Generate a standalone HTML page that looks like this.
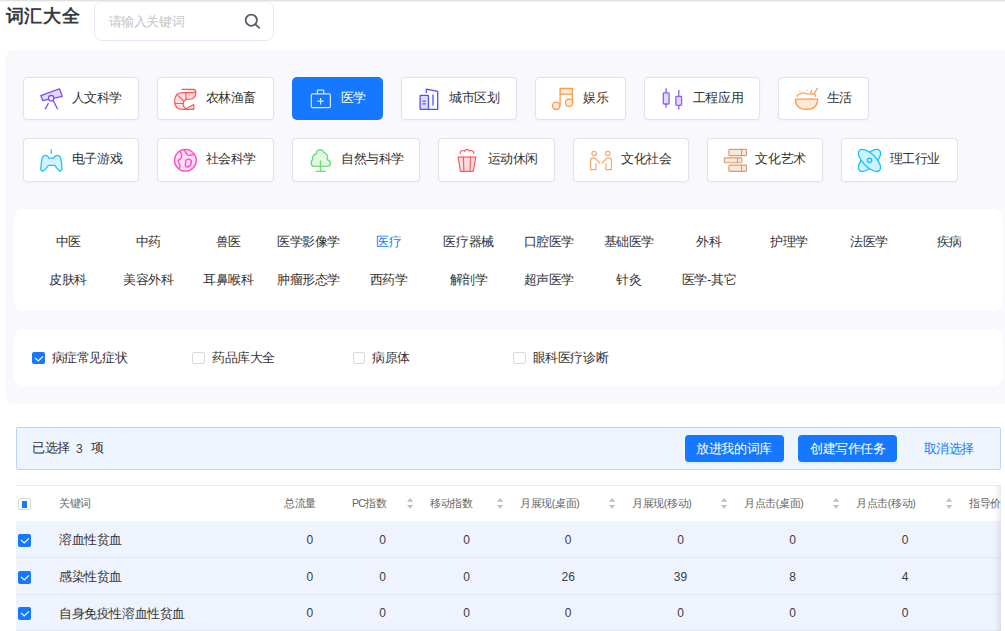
<!DOCTYPE html>
<html><head><meta charset="utf-8"><style>
html,body{margin:0;padding:0;background:#fff;}
body{width:1005px;height:631px;overflow:hidden;position:relative;font-family:"Liberation Sans",sans-serif;color:#333;}
.t{position:absolute;white-space:nowrap;font-size:13px;letter-spacing:-0.4px;line-height:20px;}
.ic{position:absolute;overflow:visible;}
.box{position:absolute;box-sizing:border-box;}
</style></head><body>

<div class="box" style="left:0;top:0;width:1005px;height:2px;background:linear-gradient(#d8d9dc,#e9eaec 45%,#fff)"></div>
<span class="t" style="left:5.6px;top:3px;font-size:18px;letter-spacing:0.9px;line-height:26px;font-weight:bold;color:#363b42">词汇大全</span>
<div class="box" style="left:94px;top:1.3px;width:180px;height:39.7px;border:1px solid #e6e7f6;border-radius:8px;background:#fff"></div>
<span class="t" style="left:108.70px;top:11.80px;color:#c4c4c4">请输入关键词</span>
<svg class="ic" style="left:243.4px;top:11.6px" width="19" height="18" viewBox="0 0 19 18"><g stroke="#56606a" stroke-width="1.8" fill="none" stroke-linecap="round"><circle cx="8.3" cy="8.2" r="5.6"/><path d="M12.4,12.3 L16.2,15.8"/></g></svg>
<div class="box" style="left:5px;top:50px;width:1020px;height:353.8px;background:#f8f8fd;border-radius:10px"></div>
<div class="box" style="left:23px;top:77px;width:116px;height:43px;background:#fff;border:1px solid #e0e3e9;border-radius:4px;box-shadow:0 1px 3px rgba(20,30,60,0.04)"></div>
<svg class="ic" style="left:36px;top:84px" width="32" height="32" viewBox="0 0 32 32"><g stroke="#7c4dff" stroke-width="1.3" fill="#e3dbff" stroke-linejoin="round">
<path d="M4.8,11.6 L23.4,4.8 L26.2,12.3 L6.8,16.6 Z"/>
<circle cx="15.2" cy="14.2" r="2.7" fill="#fff"/>
<path d="M12.5,19.1 L9,25.3 M17.3,16.8 L21.7,25.3" fill="none"/></g></svg>
<span class="t" style="left:71.70px;top:88.10px;color:#333">人文科学</span>
<div class="box" style="left:157px;top:77px;width:117px;height:43px;background:#fff;border:1px solid #e0e3e9;border-radius:4px;box-shadow:0 1px 3px rgba(20,30,60,0.04)"></div>
<svg class="ic" style="left:169px;top:84px" width="32" height="32" viewBox="0 0 32 32"><g stroke="#ff5659" stroke-width="1.15" fill="#ffdede" stroke-linejoin="round" stroke-linecap="round">
<path d="M12.9,5.3 H24.3 Q26.9,5.3 26.9,8.6 Q26.9,15.2 20.5,15.2 H18.2 Q14.2,16 14.2,20.3 Q14.6,24.2 17.2,24.4 L24.8,20.4 V25.4 H12.9 Q5.6,25 5.6,17 Q5.8,8.8 13.2,8.6 H26.8" />
<path d="M8.9,11.4 L14.5,16.6 M6,19.5 H14.1 M17,8.8 V15.4" fill="none"/>
<circle cx="20.3" cy="11.4" r="0.5" fill="#ff4d4f" stroke="none"/></g></svg>
<span class="t" style="left:205.70px;top:88.10px;color:#333">农林渔畜</span>
<div class="box" style="left:292px;top:77px;width:91px;height:43px;background:#1677ff;border-radius:5px"></div>
<svg class="ic" style="left:305px;top:84px" width="32" height="32" viewBox="0 0 32 32"><g stroke="#d9e7ff" stroke-width="1.2" fill="none" stroke-linejoin="round">
<rect x="6.3" y="9.9" width="19.1" height="13.7" rx="1.3"/>
<path d="M12.4,9.9 V6.6 Q12.4,6.1 12.9,6.1 H18.3 Q18.8,6.1 18.8,6.6 V9.9"/>
<path d="M15.6,14 V20.4 M12.4,17.2 H18.8"/></g></svg>
<span class="t" style="left:340.70px;top:88.10px;color:#fff">医学</span>
<div class="box" style="left:401px;top:77px;width:116px;height:43px;background:#fff;border:1px solid #e0e3e9;border-radius:4px;box-shadow:0 1px 3px rgba(20,30,60,0.04)"></div>
<svg class="ic" style="left:413px;top:84px" width="32" height="32" viewBox="0 0 32 32"><g stroke="#4f50ff" stroke-width="1.3" fill="none" stroke-linejoin="round">
<rect x="7.1" y="11.4" width="8.4" height="14" rx="0.6" fill="#dcdcff"/>
<path d="M13.4,9.1 V5.2 L24.7,7.4 V25.4 H15.5"/>
<path d="M9.6,17.2 H12.7 M9.6,19.8 H12.7 M20,10.6 V21.6"/></g></svg>
<span class="t" style="left:449.20px;top:88.10px;color:#333">城市区划</span>
<div class="box" style="left:535px;top:77px;width:91px;height:43px;background:#fff;border:1px solid #e0e3e9;border-radius:4px;box-shadow:0 1px 3px rgba(20,30,60,0.04)"></div>
<svg class="ic" style="left:547px;top:84px" width="32" height="32" viewBox="0 0 32 32"><g stroke="#ff9a4d" stroke-width="1.3" fill="#ffe8d6" stroke-linejoin="round">
<rect x="13.1" y="4.4" width="12.3" height="5.7"/>
<path d="M13.1,10 V21.6 M25.4,10 V18.6" fill="none"/>
<circle cx="9.2" cy="21.8" r="3.7"/><circle cx="22.1" cy="18.7" r="3.7"/></g></svg>
<span class="t" style="left:583.20px;top:88.10px;color:#333">娱乐</span>
<div class="box" style="left:644px;top:77px;width:116px;height:43px;background:#fff;border:1px solid #e0e3e9;border-radius:4px;box-shadow:0 1px 3px rgba(20,30,60,0.04)"></div>
<svg class="ic" style="left:657px;top:84px" width="32" height="32" viewBox="0 0 32 32"><g stroke="#8c5cff" stroke-width="1.3" fill="#e4d9ff" stroke-linejoin="round">
<path d="M9.1,4.3 V8.9 M9.1,20 V23.8 M21.8,6.1 V12.4 M21.8,21.3 V25.4" fill="none"/>
<rect x="6.3" y="8.9" width="5.8" height="11.1" rx="0.8"/>
<rect x="18.9" y="12.4" width="5.7" height="8.9" rx="0.8"/></g></svg>
<span class="t" style="left:692.90px;top:88.10px;color:#333">工程应用</span>
<div class="box" style="left:778px;top:77px;width:91px;height:43px;background:#fff;border:1px solid #e0e3e9;border-radius:4px;box-shadow:0 1px 3px rgba(20,30,60,0.04)"></div>
<svg class="ic" style="left:790px;top:84px" width="32" height="32" viewBox="0 0 32 32"><g stroke="#ff9a4d" stroke-width="1.2" fill="none" stroke-linejoin="round" stroke-linecap="round">
<path d="M5.4,15.2 H27.6 Q27.6,25.4 16.5,25.4 Q5.4,25.4 5.4,15.2 Z" fill="#ffe8d6"/>
<path d="M7.1,12.4 Q7.6,9.8 10.2,10 Q12.3,8.2 14.6,9.2 Q16.8,10 19.2,10 Q21.5,9.9 24.3,9.9 Q25.6,10.6 25.6,12.4"/>
<path d="M21.6,6.3 L20.6,10 M27.4,4.3 L24,9.9"/>
<circle cx="9.9" cy="7.1" r="0.6" fill="#ff9a4d" stroke="none"/><circle cx="17" cy="6.1" r="0.6" fill="#ff9a4d" stroke="none"/></g></svg>
<span class="t" style="left:826.90px;top:88.10px;color:#333">生活</span>
<div class="box" style="left:23px;top:138px;width:116px;height:44px;background:#fff;border:1px solid #e0e3e9;border-radius:4px;box-shadow:0 1px 3px rgba(20,30,60,0.04)"></div>
<svg class="ic" style="left:36px;top:145px" width="32" height="32" viewBox="0 0 32 32"><g stroke="#19c6f7" stroke-width="1.3" fill="#d3f4fe" stroke-linejoin="round">
<path d="M15.2,4.6 V9" fill="none"/>
<path d="M6.2,13.4 Q7,10.2 9.6,10.3 Q11.6,10.4 13.1,13.1 H17.5 Q19,10.4 21.1,10.3 Q23.9,10.2 24.7,13.4 Q25.9,19 25.9,24 Q25.6,26.2 23.6,26 Q22.8,25.8 18.8,20.3 H12.4 Q8.2,25.9 7,26 Q4.8,26 4.8,24 Q5,19 6.2,13.4 Z"/></g></svg>
<span class="t" style="left:71.90px;top:149.40px;color:#333">电子游戏</span>
<div class="box" style="left:157px;top:138px;width:117px;height:44px;background:#fff;border:1px solid #e0e3e9;border-radius:4px;box-shadow:0 1px 3px rgba(20,30,60,0.04)"></div>
<svg class="ic" style="left:169px;top:145px" width="32" height="32" viewBox="0 0 32 32"><g stroke="#ff4dc1" stroke-width="1.3" fill="none" stroke-linejoin="round">
<circle cx="16.4" cy="15.3" r="10.9" fill="#ffdcf3"/>
<path d="M10.9,6.4 Q13.5,9.5 12.2,12.8 Q10.8,14.2 9.2,15.6 Q9.8,18 11,19.8 Q11.2,21.8 10.2,23.3"/>
<path d="M15.4,4.7 Q16.5,8.2 18.8,10.1 Q21.5,10.8 24.8,9.1"/>
<path d="M17.2,15.2 Q18.4,13.8 20.6,14.4 Q23,15.5 22.3,18 Q21.5,21.5 18.5,22 Q16.3,22.3 16.4,19.5 Q16.4,17 17.2,15.2 Z"/></g></svg>
<span class="t" style="left:205.70px;top:149.40px;color:#333">社会科学</span>
<div class="box" style="left:292px;top:138px;width:128px;height:44px;background:#fff;border:1px solid #e0e3e9;border-radius:4px;box-shadow:0 1px 3px rgba(20,30,60,0.04)"></div>
<svg class="ic" style="left:305px;top:145px" width="32" height="32" viewBox="0 0 32 32"><g stroke="#6cd977" stroke-width="1.3" fill="#e1f7e3" stroke-linejoin="round" stroke-linecap="round">
<path d="M8.6,21.3 Q6,20.8 6.1,18 Q6.2,15.6 7.6,14.6 Q7,11.8 8.9,10 Q9.8,9.2 11.1,9 Q11.4,5 15,4.6 Q17.8,4.5 18.6,7.4 Q21.4,8 22.4,10.8 Q22.8,12.6 22.3,14.6 Q25.6,16 25.6,18.2 Q25.4,21.2 22.4,21.3 Z"/>
<path d="M15.5,15.8 V26.4 M11.2,26.4 H20.3" fill="none"/></g></svg>
<span class="t" style="left:341.10px;top:149.40px;color:#333">自然与科学</span>
<div class="box" style="left:438px;top:138px;width:117px;height:44px;background:#fff;border:1px solid #e0e3e9;border-radius:4px;box-shadow:0 1px 3px rgba(20,30,60,0.04)"></div>
<svg class="ic" style="left:451px;top:145px" width="32" height="32" viewBox="0 0 32 32"><g stroke="#ff5a60" stroke-width="1.2" fill="none" stroke-linejoin="round" stroke-linecap="round">
<path d="M7.1,12.2 H24.8 L22.2,26.4 H9.5 Z" fill="#ffdcdd"/>
<path d="M12.4,12.2 L12.9,26.4 M19.5,12.2 L19,26.4"/>
<path d="M9.1,8.4 Q9.2,5.4 11.6,5.5 Q12.8,5.6 13.4,6.4 Q14.3,4.3 15.8,4.3 Q17.5,4.3 18.1,6 Q19,5.3 20.5,5.5 Q22.9,5.9 22.8,8.4"/></g></svg>
<span class="t" style="left:487.50px;top:149.40px;color:#333">运动休闲</span>
<div class="box" style="left:573px;top:138px;width:116px;height:44px;background:#fff;border:1px solid #e0e3e9;border-radius:4px;box-shadow:0 1px 3px rgba(20,30,60,0.04)"></div>
<svg class="ic" style="left:585px;top:145px" width="32" height="32" viewBox="0 0 32 32"><g stroke="#ffa264" stroke-width="1.15" fill="none" stroke-linejoin="round" stroke-linecap="round">
<circle cx="9.1" cy="8.4" r="2.2"/><circle cx="22.8" cy="8.4" r="2.2"/>
<path d="M10.9,18.6 V24.6 H5.6 V15.2 Q5.6,12.9 8.4,12.9 Q9.8,12.9 10.8,13.8 L14.7,18"/>
<path d="M17.2,18 L21.1,13.8 Q22.1,12.9 23.6,12.9 Q26.4,12.9 26.4,15.2 V24.6 H20.9 V18.6"/></g></svg>
<span class="t" style="left:621.30px;top:149.40px;color:#333">文化社会</span>
<div class="box" style="left:707px;top:138px;width:116px;height:44px;background:#fff;border:1px solid #e0e3e9;border-radius:4px;box-shadow:0 1px 3px rgba(20,30,60,0.04)"></div>
<svg class="ic" style="left:720px;top:145px" width="32" height="32" viewBox="0 0 32 32"><g stroke="#db9b70" stroke-width="1.15" fill="#f7e8de" stroke-linejoin="round">
<rect x="8.9" y="4.4" width="17.5" height="6.2" rx="0.8"/><rect x="4.3" y="12.9" width="17.5" height="4.8" rx="0.8"/><rect x="8.9" y="20.1" width="17.5" height="6.2" rx="0.8"/>
<path d="M21.6,4.4 V10.6 M17.5,12.9 V17.7 M21.6,20.1 V26.3" fill="none"/></g></svg>
<span class="t" style="left:755.40px;top:149.40px;color:#333">文化艺术</span>
<div class="box" style="left:841px;top:138px;width:117px;height:44px;background:#fff;border:1px solid #e0e3e9;border-radius:4px;box-shadow:0 1px 3px rgba(20,30,60,0.04)"></div>
<svg class="ic" style="left:854px;top:145px" width="32" height="32" viewBox="0 0 32 32"><g stroke="#16c4f6" stroke-width="1.3" fill="#cff2fd" stroke-linejoin="round">
<ellipse cx="15.5" cy="15.4" rx="14.2" ry="6.5" transform="rotate(-45 15.5 15.4)"/>
<ellipse cx="15.5" cy="15.4" rx="14.2" ry="6.5" transform="rotate(45 15.5 15.4)"/>
<path d="M5.5,5.4 Q15,8 25.5,25.4 M5.5,5.4" fill="none" stroke="none"/>
<circle cx="15.5" cy="15.3" r="2.2" fill="none"/></g></svg>
<span class="t" style="left:889.70px;top:149.40px;color:#333">理工行业</span>
<div class="box" style="left:14px;top:208.5px;width:989px;height:102px;background:#fff;border-radius:10px"></div>
<span class="t" style="left:8.20px;width:120px;text-align:center;top:231.80px;color:#333">中医</span>
<span class="t" style="left:88.30px;width:120px;text-align:center;top:231.80px;color:#333">中药</span>
<span class="t" style="left:168.40px;width:120px;text-align:center;top:231.80px;color:#333">兽医</span>
<span class="t" style="left:248.50px;width:120px;text-align:center;top:231.80px;color:#333">医学影像学</span>
<span class="t" style="left:328.60px;width:120px;text-align:center;top:231.80px;color:#1677ff">医疗</span>
<span class="t" style="left:408.70px;width:120px;text-align:center;top:231.80px;color:#333">医疗器械</span>
<span class="t" style="left:488.80px;width:120px;text-align:center;top:231.80px;color:#333">口腔医学</span>
<span class="t" style="left:568.90px;width:120px;text-align:center;top:231.80px;color:#333">基础医学</span>
<span class="t" style="left:649.00px;width:120px;text-align:center;top:231.80px;color:#333">外科</span>
<span class="t" style="left:729.10px;width:120px;text-align:center;top:231.80px;color:#333">护理学</span>
<span class="t" style="left:809.20px;width:120px;text-align:center;top:231.80px;color:#333">法医学</span>
<span class="t" style="left:889.30px;width:120px;text-align:center;top:231.80px;color:#333">疾病</span>
<span class="t" style="left:8.20px;width:120px;text-align:center;top:269.60px;color:#333">皮肤科</span>
<span class="t" style="left:88.30px;width:120px;text-align:center;top:269.60px;color:#333">美容外科</span>
<span class="t" style="left:168.40px;width:120px;text-align:center;top:269.60px;color:#333">耳鼻喉科</span>
<span class="t" style="left:248.50px;width:120px;text-align:center;top:269.60px;color:#333">肿瘤形态学</span>
<span class="t" style="left:328.60px;width:120px;text-align:center;top:269.60px;color:#333">西药学</span>
<span class="t" style="left:408.70px;width:120px;text-align:center;top:269.60px;color:#333">解剖学</span>
<span class="t" style="left:488.80px;width:120px;text-align:center;top:269.60px;color:#333">超声医学</span>
<span class="t" style="left:568.90px;width:120px;text-align:center;top:269.60px;color:#333">针灸</span>
<span class="t" style="left:649.00px;width:120px;text-align:center;top:269.60px;color:#333">医学-其它</span>
<div class="box" style="left:14px;top:329px;width:989px;height:56.8px;background:#fff;border-radius:10px"></div>
<div class="box" style="left:32.00px;top:351.9px;width:13px;height:12.5px;background:#1677ff;border-radius:2px"></div>
<svg class="ic" style="left:32.00px;top:351.9px" width="13" height="13" viewBox="0 0 13 13"><path d="M3,5.9 L6.2,9 L11,4.3" stroke="#fff" stroke-width="1.15" fill="none"/></svg>
<span class="t" style="left:51.70px;top:347.50px;">病症常见症状</span>
<div class="box" style="left:192.30px;top:351.9px;width:12.8px;height:12.5px;background:#fff;border:1px solid #d9d9d9;border-radius:2px"></div>
<span class="t" style="left:212.00px;top:347.50px;">药品库大全</span>
<div class="box" style="left:352.60px;top:351.9px;width:12.8px;height:12.5px;background:#fff;border:1px solid #d9d9d9;border-radius:2px"></div>
<span class="t" style="left:372.30px;top:347.50px;">病原体</span>
<div class="box" style="left:512.90px;top:351.9px;width:12.8px;height:12.5px;background:#fff;border:1px solid #d9d9d9;border-radius:2px"></div>
<span class="t" style="left:532.60px;top:347.50px;">眼科医疗诊断</span>
<div class="box" style="left:16.4px;top:427.3px;width:984.5px;height:43px;background:#eef5ff;border:1px solid #b8d7ff;border-radius:2px"></div>
<span class="t" style="left:32.00px;top:437.90px;">已选择</span>
<span class="t" style="left:76.00px;top:438.90px;font-size:12px;letter-spacing:0;color:#444">3</span>
<span class="t" style="left:90.80px;top:437.90px;">项</span>
<div class="box" style="left:685.1px;top:435.1px;width:98.8px;height:26.7px;background:#1677ff;border-radius:4px;box-shadow:0 2px 0 rgba(5,145,255,0.08)"></div>
<span class="t" style="left:696.20px;top:438.80px;color:#fff">放进我的词库</span>
<div class="box" style="left:798.1px;top:435.1px;width:98.5px;height:26.7px;background:#1677ff;border-radius:4px;box-shadow:0 2px 0 rgba(5,145,255,0.08)"></div>
<span class="t" style="left:810.00px;top:438.80px;color:#fff">创建写作任务</span>
<span class="t" style="left:923.60px;top:438.80px;color:#1677ff">取消选择</span>
<div class="box" style="left:16.2px;top:484.6px;width:984.8px;height:1px;background:#ebebf8"></div>
<div class="box" style="left:18.2px;top:498.2px;width:12.8px;height:11.5px;background:#fff;border:1px solid #d9d9d9;border-radius:2px"></div>
<div class="box" style="left:22.3px;top:501.1px;width:5.2px;height:6.6px;background:#1677ff"></div>
<span class="t" style="left:59.00px;top:493.6px;font-size:11px;letter-spacing:0;color:#666;transform:scale(0.96);transform-origin:0 0">关键词</span>
<span class="t" style="left:283.50px;top:493.6px;font-size:11px;letter-spacing:0;color:#666;transform:scale(0.96);transform-origin:0 0">总流量</span>
<span class="t" style="left:351.50px;top:493.6px;font-size:11px;letter-spacing:0;color:#666;transform:scale(0.96);transform-origin:0 0"><span style="letter-spacing:-0.9px">PC</span>指数</span>
<span class="t" style="left:429.50px;top:493.6px;font-size:11px;letter-spacing:0;color:#666;transform:scale(0.96);transform-origin:0 0">移动指数</span>
<span class="t" style="left:519.70px;top:493.6px;font-size:11px;letter-spacing:0;color:#666;transform:scale(0.96);transform-origin:0 0">月展现(桌面)</span>
<span class="t" style="left:631.50px;top:493.6px;font-size:11px;letter-spacing:0;color:#666;transform:scale(0.96);transform-origin:0 0">月展现(移动)</span>
<span class="t" style="left:744.00px;top:493.6px;font-size:11px;letter-spacing:0;color:#666;transform:scale(0.96);transform-origin:0 0">月点击(桌面)</span>
<span class="t" style="left:856.00px;top:493.6px;font-size:11px;letter-spacing:0;color:#666;transform:scale(0.96);transform-origin:0 0">月点击(移动)</span>
<span class="t" style="left:969.20px;top:493.6px;font-size:11px;letter-spacing:0;color:#666;transform:scale(0.96);transform-origin:0 0">指导价</span>
<svg class="ic" style="left:406.60px;top:498px" width="8" height="11" viewBox="0 0 8 11"><path d="M3.15,0 L6.3,3.8 H0 Z M0,7 H6.3 L3.15,10.8 Z" fill="#bfbfbf"/></svg>
<svg class="ic" style="left:496.80px;top:498px" width="8" height="11" viewBox="0 0 8 11"><path d="M3.15,0 L6.3,3.8 H0 Z M0,7 H6.3 L3.15,10.8 Z" fill="#bfbfbf"/></svg>
<svg class="ic" style="left:608.80px;top:498px" width="8" height="11" viewBox="0 0 8 11"><path d="M3.15,0 L6.3,3.8 H0 Z M0,7 H6.3 L3.15,10.8 Z" fill="#bfbfbf"/></svg>
<svg class="ic" style="left:721.00px;top:498px" width="8" height="11" viewBox="0 0 8 11"><path d="M3.15,0 L6.3,3.8 H0 Z M0,7 H6.3 L3.15,10.8 Z" fill="#bfbfbf"/></svg>
<svg class="ic" style="left:833.30px;top:498px" width="8" height="11" viewBox="0 0 8 11"><path d="M3.15,0 L6.3,3.8 H0 Z M0,7 H6.3 L3.15,10.8 Z" fill="#bfbfbf"/></svg>
<svg class="ic" style="left:945.80px;top:498px" width="8" height="11" viewBox="0 0 8 11"><path d="M3.15,0 L6.3,3.8 H0 Z M0,7 H6.3 L3.15,10.8 Z" fill="#bfbfbf"/></svg>
<div class="box" style="left:16.2px;top:520.7px;width:984.8px;height:111px;background:#eff3fe"></div>
<div class="box" style="left:16.2px;top:557px;width:984.8px;height:1px;background:#e4e8f4"></div>
<div class="box" style="left:16.2px;top:594px;width:984.8px;height:1px;background:#e4e8f4"></div>
<div class="box" style="left:16.2px;top:630px;width:984.8px;height:1px;background:#e4e8f4"></div>
<div class="box" style="left:18.2px;top:533.90px;width:12.8px;height:13px;background:#1677ff;border-radius:2px"></div>
<svg class="ic" style="left:18.2px;top:533.90px" width="13" height="13" viewBox="0 0 13 13"><path d="M3,5.9 L6.2,9 L11,4.3" stroke="#fff" stroke-width="1.15" fill="none"/></svg>
<span class="t" style="left:59.00px;top:530.40px;">溶血性贫血</span>
<span class="t" style="left:279.80px;width:60px;text-align:center;top:530.00px;letter-spacing:0;font-size:12px;color:#3c3c3c">0</span>
<span class="t" style="left:352.50px;width:60px;text-align:center;top:530.00px;letter-spacing:0;font-size:12px;color:#3c3c3c">0</span>
<span class="t" style="left:436.70px;width:60px;text-align:center;top:530.00px;letter-spacing:0;font-size:12px;color:#3c3c3c">0</span>
<span class="t" style="left:538.20px;width:60px;text-align:center;top:530.00px;letter-spacing:0;font-size:12px;color:#3c3c3c">0</span>
<span class="t" style="left:650.50px;width:60px;text-align:center;top:530.00px;letter-spacing:0;font-size:12px;color:#3c3c3c">0</span>
<span class="t" style="left:762.60px;width:60px;text-align:center;top:530.00px;letter-spacing:0;font-size:12px;color:#3c3c3c">0</span>
<span class="t" style="left:875.20px;width:60px;text-align:center;top:530.00px;letter-spacing:0;font-size:12px;color:#3c3c3c">0</span>
<div class="box" style="left:18.2px;top:570.60px;width:12.8px;height:13px;background:#1677ff;border-radius:2px"></div>
<svg class="ic" style="left:18.2px;top:570.60px" width="13" height="13" viewBox="0 0 13 13"><path d="M3,5.9 L6.2,9 L11,4.3" stroke="#fff" stroke-width="1.15" fill="none"/></svg>
<span class="t" style="left:59.00px;top:567.30px;">感染性贫血</span>
<span class="t" style="left:279.80px;width:60px;text-align:center;top:566.90px;letter-spacing:0;font-size:12px;color:#3c3c3c">0</span>
<span class="t" style="left:352.50px;width:60px;text-align:center;top:566.90px;letter-spacing:0;font-size:12px;color:#3c3c3c">0</span>
<span class="t" style="left:436.70px;width:60px;text-align:center;top:566.90px;letter-spacing:0;font-size:12px;color:#3c3c3c">0</span>
<span class="t" style="left:538.20px;width:60px;text-align:center;top:566.90px;letter-spacing:0;font-size:12px;color:#3c3c3c">26</span>
<span class="t" style="left:650.50px;width:60px;text-align:center;top:566.90px;letter-spacing:0;font-size:12px;color:#3c3c3c">39</span>
<span class="t" style="left:762.60px;width:60px;text-align:center;top:566.90px;letter-spacing:0;font-size:12px;color:#3c3c3c">8</span>
<span class="t" style="left:875.20px;width:60px;text-align:center;top:566.90px;letter-spacing:0;font-size:12px;color:#3c3c3c">4</span>
<div class="box" style="left:18.2px;top:607.00px;width:12.8px;height:13px;background:#1677ff;border-radius:2px"></div>
<svg class="ic" style="left:18.2px;top:607.00px" width="13" height="13" viewBox="0 0 13 13"><path d="M3,5.9 L6.2,9 L11,4.3" stroke="#fff" stroke-width="1.15" fill="none"/></svg>
<span class="t" style="left:59.00px;top:603.70px;">自身免疫性溶血性贫血</span>
<span class="t" style="left:279.80px;width:60px;text-align:center;top:603.30px;letter-spacing:0;font-size:12px;color:#3c3c3c">0</span>
<span class="t" style="left:352.50px;width:60px;text-align:center;top:603.30px;letter-spacing:0;font-size:12px;color:#3c3c3c">0</span>
<span class="t" style="left:436.70px;width:60px;text-align:center;top:603.30px;letter-spacing:0;font-size:12px;color:#3c3c3c">0</span>
<span class="t" style="left:538.20px;width:60px;text-align:center;top:603.30px;letter-spacing:0;font-size:12px;color:#3c3c3c">0</span>
<span class="t" style="left:650.50px;width:60px;text-align:center;top:603.30px;letter-spacing:0;font-size:12px;color:#3c3c3c">0</span>
<span class="t" style="left:762.60px;width:60px;text-align:center;top:603.30px;letter-spacing:0;font-size:12px;color:#3c3c3c">0</span>
<span class="t" style="left:875.20px;width:60px;text-align:center;top:603.30px;letter-spacing:0;font-size:12px;color:#3c3c3c">0</span>
<div class="box" style="left:993px;top:484.6px;width:8px;height:147px;background:linear-gradient(90deg,rgba(20,30,60,0),rgba(20,30,60,0.035) 50%,rgba(20,30,60,0.09))"></div>
<div class="box" style="left:1001px;top:470px;width:4px;height:161px;background:#fff"></div>
</body></html>
